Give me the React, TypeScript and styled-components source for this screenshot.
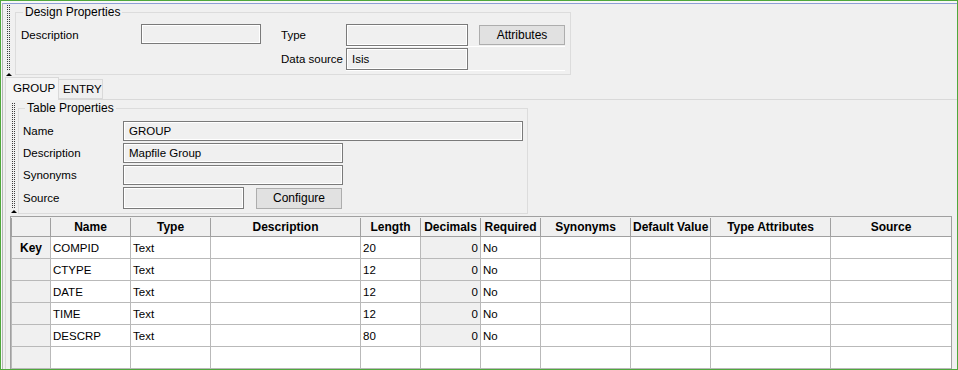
import React from 'react';
import styled, { createGlobalStyle } from 'styled-components';

const GlobalStyle = createGlobalStyle`
  html, body {
    margin: 0;
    padding: 0;
    background: #f0f0f0;
  }
  body {
    font-family: 'Liberation Sans', Arial, sans-serif;
    font-size: 11.5px;
    color: #000;
  }
`;

const Frame = styled.div`
  width: 958px;
  height: 370px;
  box-sizing: border-box;
  border: 1px solid #4fa83d;
  background: #f7f7f7;
  padding: 2px 0 0 1px;
  overflow: hidden;
`;

const Inner = styled.div`
  height: 100%;
  box-sizing: border-box;
  background: #f0f0f0;
  border-top: 1px solid #8c9fd6;
  border-left: 1px solid #b4b4b4;
`;

const TopSection = styled.div`
  display: flex;
  align-items: flex-start;
  height: 73px;
`;

const Grip = styled.div<{ $left: number; $top: number; $height: number }>`
  display: flex;
  flex-direction: column;
  align-items: center;
  width: 5px;
  margin-left: ${p => p.$left}px;
  margin-top: ${p => p.$top}px;

  .dots {
    width: 3px;
    height: ${p => p.$height}px;
    background:
      linear-gradient(to bottom, #3c3c3c 50%, transparent 50%) 0 0 / 1px 2px repeat-y,
      linear-gradient(to bottom, #3c3c3c 50%, transparent 50%) 2px 0 / 1px 2px repeat-y;
  }

  .arrow {
    margin-top: 2px;
    width: 0;
    height: 0;
    border-left: 3px solid transparent;
    border-right: 3px solid transparent;
    border-bottom: 3px solid #000;
  }
`;

const GroupBox = styled.fieldset<{ $width: number; $left: number; $pad: string }>`
  margin: 1px 0 0 ${p => p.$left}px;
  width: ${p => p.$width}px;
  box-sizing: border-box;
  min-width: 0;
  border: 1px solid #dcdcdc;
  padding: ${p => p.$pad};

  legend {
    font-size: 12px;
    line-height: 14px;
    margin-left: 2px;
    padding: 0 2px;
  }
`;

const DesignGrid = styled.div`
  display: grid;
  grid-template-columns: 120px 140px 65px 219px;
  grid-template-rows: 22px 22px;
  row-gap: 2px;
  align-items: center;
`;

const Label = styled.span`
  white-space: nowrap;
`;

const TextBox = styled.div<{ $w: number; $h?: number }>`
  width: ${p => p.$w}px;
  height: ${p => p.$h ?? 20}px;
  box-sizing: border-box;
  border: 1px solid #7a7a7a;
  box-shadow: inset 0 0 0 1px #fff;
  background: #f0f0f0;
  padding: 0 5px;
  display: flex;
  align-items: center;
  white-space: nowrap;
  align-self: start;
  flex-shrink: 0;
`;

// a row of the right hand table layout, with its white divider line
const RowLine = styled.div`
  height: 23px;
  align-self: start;
  box-sizing: border-box;
  border-bottom: 1px solid #fff;
  display: flex;
  align-items: flex-start;
  gap: 11px;
`;

const Button = styled.div<{ $w: number; $h?: number; $top?: number }>`
  width: ${p => p.$w}px;
  height: ${p => p.$h ?? 20}px;
  margin-top: ${p => p.$top ?? 0}px;
  box-sizing: border-box;
  border: 1px solid #adadad;
  background: #e1e1e1;
  display: flex;
  align-items: center;
  justify-content: center;
  font-size: 12px;
  flex-shrink: 0;
`;

const TabStrip = styled.div`
  display: flex;
  align-items: flex-end;
  margin: 0 0 0 2px;
  height: 22px;
  position: relative;
  z-index: 1;
`;

const Tab = styled.div<{ $active?: boolean; $w: number }>`
  width: ${p => p.$w}px;
  height: ${p => (p.$active ? 23 : 20)}px;
  box-sizing: border-box;
  border: 1px solid #d9d9d9;
  border-bottom: ${p => (p.$active ? 'none' : '1px solid #d9d9d9')};
  background: ${p => (p.$active ? '#f5f5f5' : '#f0f0f0')};
  margin-bottom: ${p => (p.$active ? -1 : 0)}px;
  ${p => (p.$active ? '' : 'border-left: none;')}
  font-size: 11.5px;
  display: flex;
  align-items: center;
  padding-left: ${p => (p.$active ? 7 : 4)}px;
  padding-bottom: ${p => (p.$active ? 2 : 0)}px;
  white-space: nowrap;
`;

const TabPanel = styled.div`
  margin-left: 2px;
  border-top: 1px solid #d9d9d9;
  border-left: 1px solid #d9d9d9;
  height: 280px;
  display: flex;
  flex-direction: column;
`;

const PanelTop = styled.div`
  display: flex;
  align-items: flex-start;
`;

const TableForm = styled.div`
  display: grid;
  grid-template-columns: 100px 1fr;
  grid-template-rows: 20px 20px 20px 22px;
  row-gap: 2px;
  align-items: center;
`;

const SourceRow = styled.div`
  display: flex;
  align-items: center;
  gap: 12px;
  height: 22px;
`;

const GridBox = styled.div`
  margin: 2px 0 0 4px;
  width: 942px;
  box-sizing: border-box;
  border: 1px solid #a0a0a0;
  padding: 1px 0 0 0;
  background: #f0f0f0;
  flex: 1;
  overflow: hidden;
`;

const Table = styled.table`
  border-collapse: collapse;
  table-layout: fixed;
  width: 940px;
  background: #fff;
`;

const Th = styled.th`
  height: 18px;
  padding: 0 2px;
  background: #f0f0f0;
  border: 1px solid #a0a0a0;
  border-top: none;
  font-size: 12px;
  font-weight: bold;
  text-align: center;
  white-space: nowrap;
  overflow: hidden;
`;

const Td = styled.td<{ $shade?: boolean; $right?: boolean; $head?: boolean }>`
  height: 21px;
  padding: 0 2px;
  border: 1px solid #b9b9b9;
  background: ${p => (p.$shade || p.$head ? '#f0f0f0' : '#fff')};
  text-align: ${p => (p.$right ? 'right' : p.$head ? 'center' : 'left')};
  font-weight: ${p => (p.$head ? 'bold' : 'normal')};
  font-size: ${p => (p.$head ? '12px' : '11.5px')};
  white-space: nowrap;
`;

const columns = [
  { key: 'rowhead', label: '', width: 39 },
  { key: 'name', label: 'Name', width: 80 },
  { key: 'type', label: 'Type', width: 80 },
  { key: 'desc', label: 'Description', width: 150 },
  { key: 'length', label: 'Length', width: 60 },
  { key: 'decimals', label: 'Decimals', width: 60 },
  { key: 'required', label: 'Required', width: 60 },
  { key: 'synonyms', label: 'Synonyms', width: 90 },
  { key: 'default', label: 'Default Value', width: 80 },
  { key: 'typeattr', label: 'Type Attributes', width: 120 },
  { key: 'source', label: 'Source', width: 121 },
];

const rows = [
  { head: 'Key', name: 'COMPID', type: 'Text', length: '20', decimals: '0', required: 'No' },
  { head: '', name: 'CTYPE', type: 'Text', length: '12', decimals: '0', required: 'No' },
  { head: '', name: 'DATE', type: 'Text', length: '12', decimals: '0', required: 'No' },
  { head: '', name: 'TIME', type: 'Text', length: '12', decimals: '0', required: 'No' },
  { head: '', name: 'DESCRP', type: 'Text', length: '80', decimals: '0', required: 'No' },
  { head: '', name: '', type: '', length: '', decimals: '', required: '' },
];

const SplitGrip: React.FC<{ left: number; top: number; height: number }> = ({ left, top, height }) => (
  <Grip $left={left} $top={top} $height={height}>
    <div className="dots" />
    <div className="arrow" />
  </Grip>
);

const App: React.FC = () => {
  return (
    <>
      <GlobalStyle />
      <Frame>
        <Inner>
          <TopSection>
            <SplitGrip left={3} top={1} height={66} />
            <GroupBox $width={556} $left={4} $pad="5px 5px 4px 5px">
              <legend>Design Properties</legend>
              <DesignGrid>
                <Label>Description</Label>
                <TextBox $w={120} />
                <Label>Type</Label>
                <RowLine>
                  <TextBox $w={122} $h={22} />
                  <Button $w={86} $h={20} $top={1}>Attributes</Button>
                </RowLine>
                <span />
                <span />
                <Label>Data source</Label>
                <RowLine>
                  <TextBox $w={122} $h={22}>Isis</TextBox>
                </RowLine>
              </DesignGrid>
            </GroupBox>
          </TopSection>

          <TabStrip>
            <Tab $active $w={54}>GROUP</Tab>
            <Tab $w={44}>ENTRY</Tab>
          </TabStrip>

          <TabPanel>
            <PanelTop>
              <SplitGrip left={5} top={3} height={105} />
              <GroupBox $width={510} $left={2} $pad="6px 3px 4px 4px">
                <legend>Table Properties</legend>
                <TableForm>
                  <Label>Name</Label>
                  <TextBox $w={400}>GROUP</TextBox>
                  <Label>Description</Label>
                  <TextBox $w={220}>Mapfile Group</TextBox>
                  <Label>Synonyms</Label>
                  <TextBox $w={220} />
                  <Label>Source</Label>
                  <SourceRow>
                    <TextBox $w={121} $h={22} />
                    <Button $w={86} $h={21}>Configure</Button>
                  </SourceRow>
                </TableForm>
              </GroupBox>
            </PanelTop>

            <GridBox>
              <Table>
                <colgroup>
                  {columns.map(c => (
                    <col key={c.key} style={{ width: c.width }} />
                  ))}
                </colgroup>
                <thead>
                  <tr>
                    {columns.map(c => (
                      <Th key={c.key}>{c.label}</Th>
                    ))}
                  </tr>
                </thead>
                <tbody>
                  {rows.map((r, i) => (
                    <tr key={i}>
                      <Td $head>{r.head}</Td>
                      <Td>{r.name}</Td>
                      <Td>{r.type}</Td>
                      <Td />
                      <Td>{r.length}</Td>
                      <Td $shade={r.name !== ''} $right>{r.decimals}</Td>
                      <Td>{r.required}</Td>
                      <Td />
                      <Td />
                      <Td />
                      <Td />
                    </tr>
                  ))}
                </tbody>
              </Table>
            </GridBox>
          </TabPanel>
        </Inner>
      </Frame>
    </>
  );
};

export default App;
